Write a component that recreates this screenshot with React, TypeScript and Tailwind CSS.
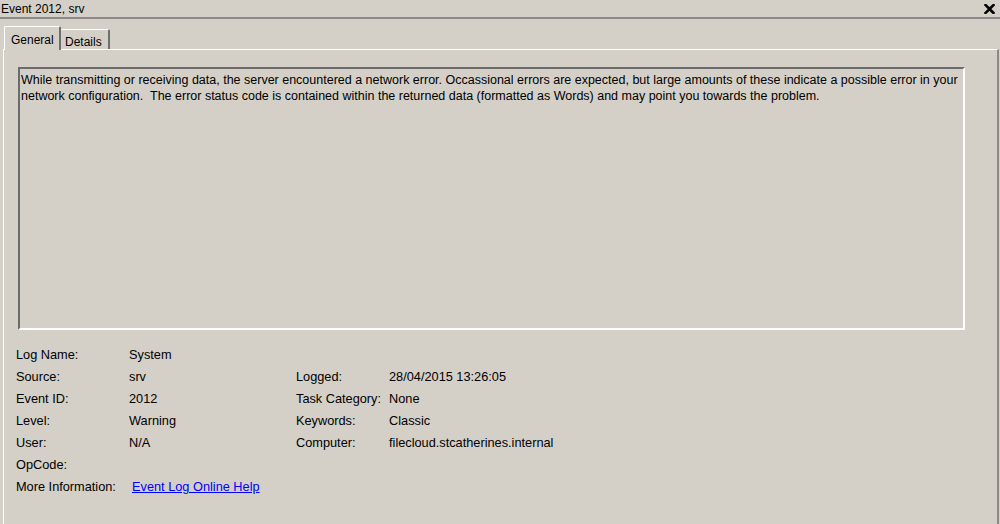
import React from 'react'

const font = { fontFamily: '"Liberation Sans", Arial, sans-serif' }

const Row = ({ label, value, label2, value2 }: { label: string; value?: React.ReactNode; label2?: string; value2?: string }) => (
  <div className="flex h-[22px] items-center">
    <div className="w-[113px]">{label}</div>
    <div className="w-[167px]">{value}</div>
    {label2 && <div className="w-[93px]">{label2}</div>}
    {value2 && <div>{value2}</div>}
  </div>
)

export default function App() {
  return (
    <div className="w-[1000px] h-[524px] overflow-hidden bg-[#d4d0c8] text-[12px] text-black flex flex-col" style={font}>
      {/* title */}
      <div className="h-[17px] flex items-center justify-between pl-[1px] pr-[5px]">
        <span className="leading-none">Event 2012, srv</span>
        <svg width="11" height="10" viewBox="0 0 11 10" className="mt-[1px]">
          <path d="M1.5 1 L9.5 9 M9.5 1 L1.5 9" stroke="#000" strokeWidth="2.6" strokeLinecap="square" />
        </svg>
      </div>
      <div className="h-[2px] bg-[#8c8a86]" />

      {/* tabs */}
      <div className="flex items-end h-[30px] pl-[4px] pr-[2px]">
        <div className="relative z-10 -mb-[1px] h-[24px] w-[57px] border-l border-t border-white border-r-2 border-r-[#6e6e6e] rounded-t-[2px] bg-[#d4d0c8] flex items-start pt-[4px] pl-[6px]">
          General
        </div>
        <div className="h-[20px] w-[49px] border-t border-white border-r-2 border-r-[#6e6e6e] rounded-t-[2px] flex items-start pt-[3px] pl-[4px]">
          Details
        </div>
      </div>

      {/* panel */}
      <div className="flex-1 ml-[3px] mr-[1px] border-l border-t border-white border-r-2 border-r-[#8c8a86] flex flex-col pl-[14px] pr-[32px] pt-[17px]">
        <div className="h-[263px] border-t-2 border-l-2 border-t-[#6b6b6b] border-l-[#6b6b6b] border-b-2 border-r-2 border-b-white border-r-white px-[1px] pt-[3px] leading-[16px] text-[12.5px]">
          While transmitting or receiving data, the server encountered a network error. Occassional errors are expected, but large amounts of these indicate a possible error in your
          <br />
          network configuration.&nbsp; The error status code is contained within the returned data (formatted as Words) and may point you towards the problem.
        </div>

        <div className="mt-[14px] -ml-[2px] flex flex-col text-[12.75px]">
          <Row label="Log Name:" value="System" />
          <Row label="Source:" value="srv" label2="Logged:" value2="28/04/2015 13:26:05" />
          <Row label="Event ID:" value="2012" label2="Task Category:" value2="None" />
          <Row label="Level:" value="Warning" label2="Keywords:" value2="Classic" />
          <Row label="User:" value="N/A" label2="Computer:" value2="filecloud.stcatherines.internal" />
          <Row label="OpCode:" />
          <Row
            label="More Information:"
            value={<a href="#" className="ml-[3px] text-[#0000ff] underline">Event Log Online Help</a>}
          />
        </div>
      </div>
    </div>
  )
}
